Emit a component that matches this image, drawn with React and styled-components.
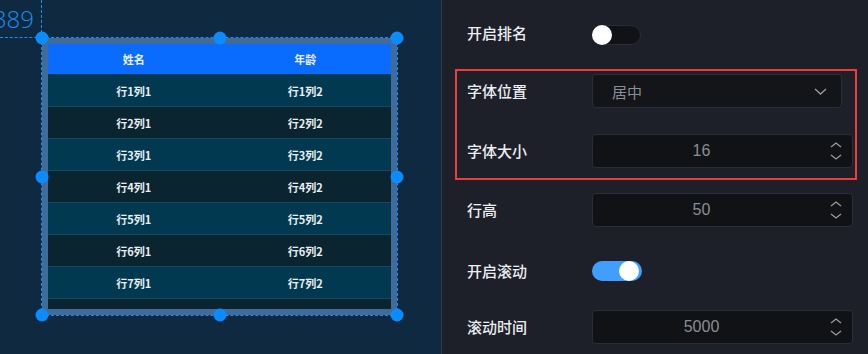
import React from "react";
import styled, { createGlobalStyle } from "styled-components";

const Global = createGlobalStyle`
  html, body { margin: 0; padding: 0; background: #1e2029; }
  body { font-family: "Noto Sans CJK SC", "Noto Sans", sans-serif; }
  * { box-sizing: border-box; }
`;

const Shell = styled.div`
  display: flex;
  width: 868px;
  height: 354px;
  overflow: hidden;
`;

const Canvas = styled.div`
  position: relative;
  width: 442px;
  flex: none;
  height: 100%;
  background: #0f2941;
  border-right: 1px solid #353842;
  overflow: hidden;
`;

const RulerLabel = styled.div`
  position: absolute;
  right: calc(100% - 34px);
  top: 3px;
  font-family: "Open Sans", "Liberation Sans", sans-serif;
  font-weight: 300;
  font-size: 24px;
  line-height: 32px;
  color: #1a8ef0;
  white-space: nowrap;
`;

const GuideV = styled.div`
  position: absolute;
  left: 41px;
  top: 0;
  height: 38px;
  border-left: 1px dashed #1a8cff;
`;

const GuideH = styled.div`
  position: absolute;
  left: 0;
  top: 37px;
  width: 42px;
  border-top: 1px dashed #1a8cff;
`;

const Frame = styled.div`
  position: absolute;
  left: 41px;
  top: 37px;
  width: 357px;
  height: 279px;
  border: 1px dashed #1a8cff;
`;

const TableBox = styled.div`
  width: 100%;
  height: 100%;
  border: 6px solid #416b98;
  overflow: hidden;
  background: #0a2430;
`;

const HeaderRow = styled.div`
  display: grid;
  grid-template-columns: 1fr 1fr;
  height: 31px;
  background: #0a6cff;
  align-items: center;
  border-bottom: 1px solid #0b3a58;
`;

const Row = styled.div`
  display: grid;
  grid-template-columns: 1fr 1fr;
  height: 32px;
  align-items: center;
  background: ${(p) => (p.$alt ? "#0a2430" : "#013a50")};
  border-bottom: 1px solid #1c4660;
`;

const Cell = styled.div`
  text-align: center;
  font-size: 11px;
  font-weight: 700;
  color: #e9eef2;
  line-height: 14px;
`;

const Handle = styled.div`
  position: absolute;
  width: 13px;
  height: 13px;
  border-radius: 50%;
  background: #0a8cff;
  left: ${(p) => p.$x}%;
  top: ${(p) => p.$y}%;
  transform: translate(-50%, -50%);
`;

const Panel = styled.div`
  flex: 1;
  background: #1e2029;
  padding: 18px 15px 0 25px;
  display: flex;
  flex-direction: column;
`;

const FormRow = styled.div`
  display: flex;
  align-items: center;
  height: 34px;
  margin-top: ${(p) => p.$mt || 0}px;
`;

const Label = styled.div`
  width: 125px;
  flex: none;
  font-size: 15px;
  font-weight: 500;
  color: #eceef2;
  line-height: 20px;
  padding-bottom: ${(p) => (p.$up ? 4 : 0)}px;
`;

const Highlight = styled.div`
  margin: 17px -4px 0 -12px;
  border: 2px solid #ef3b3b;
  padding: 3px 2px 10px 10px;
  display: flex;
  flex-direction: column;
`;

const Toggle = styled.div`
  position: relative;
  width: ${(p) => (p.$on ? 50 : 49)}px;
  height: 20px;
  border-radius: 10px;
  background: ${(p) => (p.$on ? "#409eff" : "#111217")};
  border: ${(p) => (p.$on ? "none" : "1px solid #2b2d35")};
  display: flex;
  align-items: center;
  justify-content: ${(p) => (p.$on ? "flex-end" : "flex-start")};
  padding: ${(p) => (p.$on ? "0 3px" : "0")};
`;

const Knob = styled.div`
  width: 20px;
  height: 20px;
  border-radius: 50%;
  background: #ffffff;
  margin: ${(p) => (p.$on ? "0" : "-1px 0 -1px -1px")};
`;

const Select = styled.div`
  width: 250px;
  height: 34px;
  border: 1px solid #2b2e37;
  border-radius: 4px;
  background: #141519;
  display: flex;
  align-items: center;
  justify-content: space-between;
  padding: 0 14px 0 19px;
  font-size: 15px;
  color: #8b8e95;
`;

const NumberBox = styled.div`
  flex: 1;
  height: 34px;
  border: 1px solid #2b2e37;
  border-radius: 4px;
  background: #111216;
  display: flex;
  align-items: center;
`;

const NumberValue = styled.div`
  flex: 1;
  text-align: center;
  font-family: "Liberation Sans", Arial, sans-serif;
  font-size: 16px;
  color: #8a8d94;
`;

const Spinner = styled.div`
  width: 42px;
  display: flex;
  flex-direction: column;
  align-items: flex-end;
  justify-content: center;
  gap: 6px;
  padding-right: 10px;
`;

const Chevron = ({ dir = "down", w = 12, h = 7 }) => (
  <svg width={w} height={h} viewBox={`0 0 ${w} ${h}`} style={{ display: "block" }}>
    <polyline
      points={
        dir === "down"
          ? `1,1 ${w / 2},${h - 1} ${w - 1},1`
          : `1,${h - 1} ${w / 2},1 ${w - 1},${h - 1}`
      }
      fill="none"
      stroke="#9a9ca3"
      strokeWidth="1.3"
    />
  </svg>
);

const NumberInput = ({ value }) => (
  <NumberBox>
    <NumberValue>{value}</NumberValue>
    <Spinner>
      <Chevron dir="up" w={12} h={6} />
      <Chevron dir="down" w={12} h={6} />
    </Spinner>
  </NumberBox>
);

const rows = [1, 2, 3, 4, 5, 6, 7, 8];
const handles = [
  [0, 0], [50, 0], [100, 0],
  [0, 50], [100, 50],
  [0, 100], [50, 100], [100, 100],
];

export default function App() {
  return (
    <>
      <Global />
      <Shell>
        <Canvas>
          <RulerLabel>389</RulerLabel>
          <GuideV />
          <GuideH />
          <Frame>
            <TableBox>
              <HeaderRow>
                <Cell>姓名</Cell>
                <Cell>年龄</Cell>
              </HeaderRow>
              {rows.map((r) => (
                <Row key={r} $alt={r % 2 === 0}>
                  <Cell>{`行${r}列1`}</Cell>
                  <Cell>{`行${r}列2`}</Cell>
                </Row>
              ))}
            </TableBox>
            {handles.map(([x, y], i) => (
              <Handle key={i} $x={x} $y={y} />
            ))}
          </Frame>
        </Canvas>
        <Panel>
          <FormRow>
            <Label $up>开启排名</Label>
            <Toggle>
              <Knob />
            </Toggle>
          </FormRow>
          <Highlight>
            <FormRow>
              <Label>字体位置</Label>
              <Select>
                <span>居中</span>
                <Chevron dir="down" w={13} h={7} />
              </Select>
            </FormRow>
            <FormRow $mt={26}>
              <Label>字体大小</Label>
              <NumberInput value="16" />
            </FormRow>
          </Highlight>
          <FormRow $mt={13}>
            <Label>行高</Label>
            <NumberInput value="50" />
          </FormRow>
          <FormRow $mt={27}>
            <Label>开启滚动</Label>
            <Toggle $on>
              <Knob $on />
            </Toggle>
          </FormRow>
          <FormRow $mt={22}>
            <Label>滚动时间</Label>
            <NumberInput value="5000" />
          </FormRow>
        </Panel>
      </Shell>
    </>
  );
}
